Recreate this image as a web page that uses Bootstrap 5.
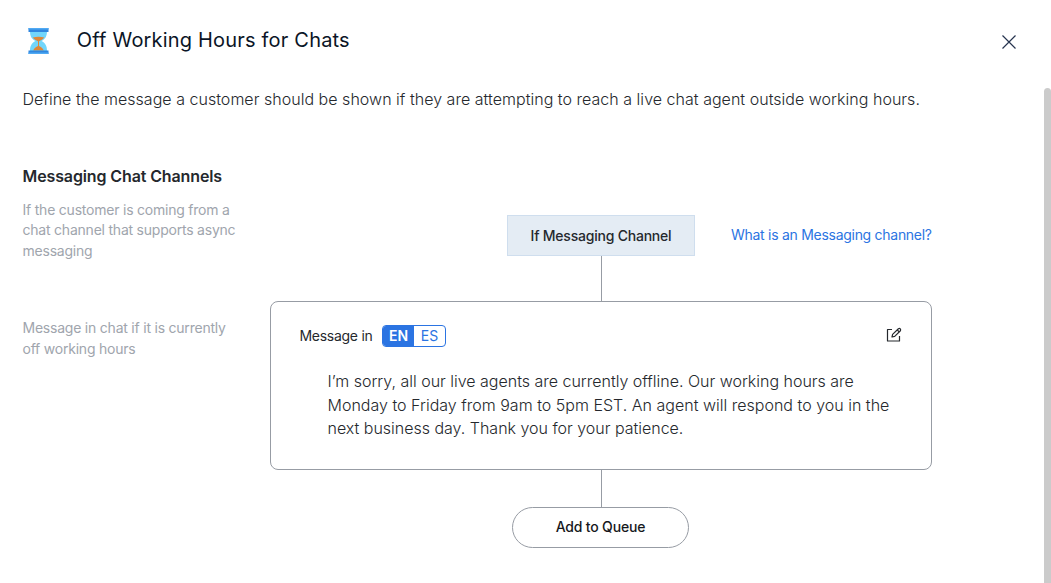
<!DOCTYPE html>
<html lang="en">
<head>
<meta charset="utf-8">
<meta name="viewport" content="width=device-width, initial-scale=1">
<title>Off Working Hours for Chats</title>
<link href="https://cdn.jsdelivr.net/npm/bootstrap@5.3.0/dist/css/bootstrap.min.css" rel="stylesheet">
<style>
body{font-family:Inter,"Liberation Sans",sans-serif;color:#25282d;height:100vh;overflow:hidden}
.panel-head{height:82px;padding:0 34px 0 28px}
.panel-title{font-size:20px;line-height:24px;font-weight:400;color:#0b1526;margin:0 0 2px 27.800px;letter-spacing:.19px}
.close-x{line-height:0;color:#26344f;margin-top:2px}
.intro{font-size:16px;line-height:24px;font-weight:300;padding-left:22.500px;margin:5px 0 0;letter-spacing:.027px}
.flow-grid{display:grid;grid-template-columns:247.500px 662px;grid-template-rows:68px 45px 169px 37px 41px;padding-left:22.500px}
.sect{font-size:16px;line-height:24px;font-weight:600;margin:53px 0 0 22.500px;letter-spacing:-.12px}
.hint{font-size:14px;line-height:20.4px;color:#a0a5ad;margin:0;width:225px;letter-spacing:-.22px}
.hint-first{padding-top:12px}
.hint-second{padding-top:17px}
.hint-second .hint{line-height:20.6px}
.cond-row{padding:27px 0 0 237px}
.cond{width:188px;height:41px;background:#e4ecf4;border:1px solid #cfdeee;font-size:14px;font-weight:500;letter-spacing:-.22px}
.help{font-size:14px;line-height:20px;color:#2b74e2;letter-spacing:-.28px;margin:10px 0 0 36px}
.wire{width:1px;background:#979ca4;margin-left:331px}
.msg-box{border:1px solid #979ca4;border-radius:8px;padding:23px 29px 0 28.500px}
.msg-label{font-size:14px;line-height:20px;letter-spacing:-.28px}
.lang{height:22px;border:1px solid #2b74e2;border-radius:4px;overflow:hidden;font-size:14px;line-height:20px;color:#2b74e2;width:64px;margin-left:9.500px}
.lang .on{background:#2b74e2;color:#fff;font-weight:600}
.reply{font-size:16px;line-height:23.6px;font-weight:300;margin:23px 0 0 28px;letter-spacing:-.01px}
.queue{width:177px;border:1px solid #979ca4;border-radius:21px;background:#fff;font-size:14px;font-weight:500;color:#16181c;margin-left:242px;padding-bottom:3px;letter-spacing:-.18px}
.thumb{right:0;top:88px;width:7px;height:495px;border-radius:4px 4px 0 0;background:#cbcbcb}
</style>
</head>
<body class="position-relative">
<header class="panel-head d-flex align-items-center">
<svg width="21" height="26" viewBox="0 0 21 26"><path d="M2 3h17c0 5-1.500 8-5.500 10 4 2 5.500 5 5.500 10H2c0-5 1.500-8 5.500-10C3.500 11 2 8 2 3z" fill="#72d6fb"/><path d="M4.800 9.500q5.700-1.600 11.400 0c-1.200 2-3.500 3-5.200 3.700v4.800c2 .8 4 2.200 4.800 4.500H5.200c.8-2.300 2.800-3.700 4.800-4.500v-4.800C8.300 12.500 6 11.500 4.800 9.500z" fill="#de8738"/><path d="M.5 0h20v4H.5zM.5 22.500h20V26H.5z" fill="#2f86df"/><path d="M.5 .8h20M.5 25.200h20" stroke="#50aaf3" stroke-width="1.500"/></svg>
<h1 class="panel-title">Off Working Hours for Chats</h1>
<a class="close-x ms-auto" role="button" aria-label="Close"><svg width="16" height="16" viewBox="0 0 16 16" stroke="currentColor" stroke-width="1.200" fill="none"><path d="M1.500 1.500l13 13m0-13l-13 13"/></svg></a>
</header>
<main>
<p class="intro">Define the message a customer should be shown if they are attempting to reach a live chat agent outside working hours.</p>
<h2 class="sect">Messaging Chat Channels</h2>
<div class="flow-grid">
<div class="hint-first"><p class="hint">If the customer is coming from a<br>chat channel that supports async<br>messaging</p></div>
<div class="cond-row d-flex align-items-start">
<div class="cond d-flex flex-shrink-0 align-items-center justify-content-center">If Messaging Channel</div>
<a class="help text-decoration-none text-nowrap" role="button">What is an Messaging channel?</a>
</div>
<div></div><div class="wire"></div>
<div class="hint-second"><p class="hint">Message in chat if it is currently<br>off working hours</p></div>
<section class="msg-box">
<div class="d-flex align-items-center">
<span class="msg-label">Message in</span>
<div class="lang d-flex text-center"><span class="on w-50">EN</span><span class="w-50">ES</span></div>
<svg class="ms-auto mb-1" width="16" height="16" viewBox="0 0 16 16" fill="none" stroke="#25282d" stroke-width="1.200" stroke-linejoin="round"><path d="M6 3.500H1.500v11.500H13.500V10"/><path d="M6 11l.6-2.600 5.800-5.600q1.200-.7 1.900 0t.1 2L8.700 10.400z"/><path d="M11.300 4l1.900 1.900"/></svg>
</div>
<p class="reply">I’m sorry, all our live agents are currently offline. Our working hours are<br><span style="letter-spacing:.01px">Monday to Friday from 9am to 5pm EST. An agent will respond to you in the</span><br>next business day. Thank you for your patience.</p>
</section>
<div></div><div class="wire"></div>
<div></div><button class="queue" type="button">Add to Queue</button>
</div>
</main>
<div class="thumb position-absolute"></div>
<script src="https://cdn.jsdelivr.net/npm/bootstrap@5.3.0/dist/js/bootstrap.bundle.min.js"></script>
</body>
</html>
